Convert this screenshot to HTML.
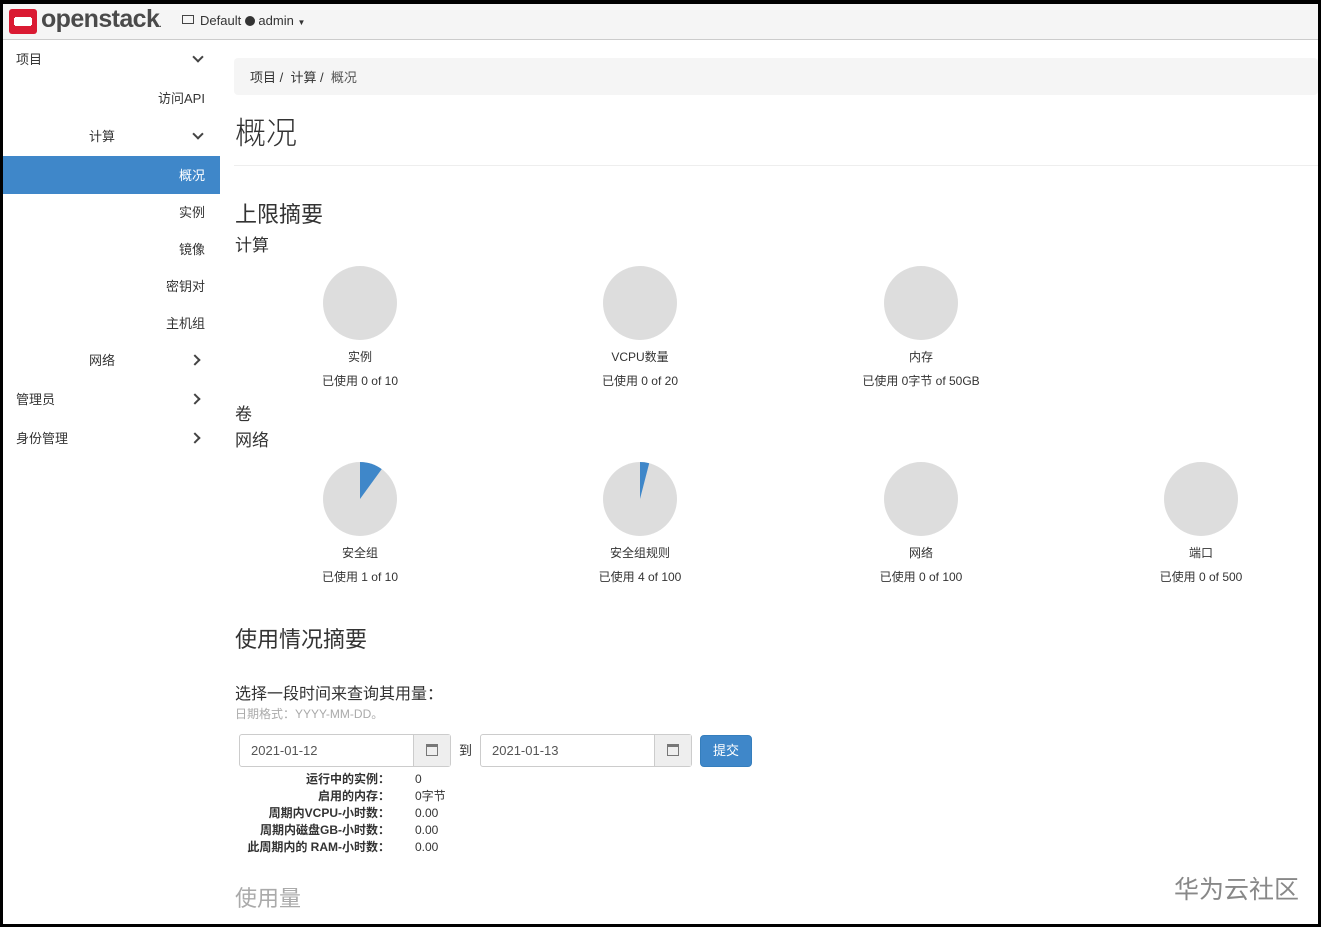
<!DOCTYPE html>
<html><head><meta charset="utf-8"><style>
*{margin:0;padding:0;box-sizing:border-box}
body{width:1321px;height:927px;background:#000;font-family:"Liberation Sans","Noto Sans CJK SC",sans-serif;color:#333;overflow:hidden;position:relative}
.page{position:absolute;left:3px;top:4px;width:1315px;height:920px;background:#fff;overflow:hidden}
.a{position:absolute;white-space:nowrap}
.top{position:absolute;left:0;top:0;width:1315px;height:36px;background:#f5f5f5;border-bottom:1px solid #ccc}
.nav{font-size:13px;color:#333}
.chev{position:absolute;width:8px;height:8px;border-right:2.5px solid #444;border-bottom:2.5px solid #444}
.pie{position:absolute;width:74px;height:74px}
.lbl{position:absolute;font-size:12px;text-align:center;width:200px}
.inp{position:absolute;height:33px;border:1px solid #ccc;border-radius:3px;font-size:13px;color:#555;padding:8px 11px}
.addon{position:absolute;top:0;right:0;width:37px;height:31px;background:#eee;border-left:1px solid #ccc}
.st{font-size:12px;color:#333}
</style></head><body><div class="page">
<div class="top">
 <div class="a" style="left:6px;top:5px;width:28px;height:25px;background:#da1a32;border-radius:3px"></div>
 <div class="a" style="left:12px;top:13px;width:16px;height:9px;background:#fff"></div>
 <div class="a" style="left:6px;top:14px;width:28px;height:7px;background:#fff"></div>
 <div class="a" style="left:6px;top:14px;width:5px;height:7px;background:#da1a32"></div>
 <div class="a" style="left:29px;top:14px;width:5px;height:7px;background:#da1a32"></div>
 <div class="a" style="left:38px;top:1px;font-size:25px;color:#4a4a4a;font-weight:bold;letter-spacing:-0.6px">openstack<span style="font-size:8px">.</span></div>
 <div class="a" style="left:179px;top:11px;width:12px;height:9px;border:1.5px solid #444"></div>
 <div class="a" style="left:197px;top:9px;font-size:13px;color:#333">Default <span style="display:inline-block;width:10px;height:10px;border-radius:50%;background:#333;vertical-align:-1px"></span> admin <span style="font-size:8px">▼</span></div>
</div>
<div class="a nav" style="left:13px;top:45px">项目</div><div class="chev" style="left:191px;top:49px;transform:rotate(45deg)"></div>
<div class="a nav" style="left:155px;top:84px">访问API</div>
<div class="a nav" style="left:86px;top:122px">计算</div><div class="chev" style="left:191px;top:126px;transform:rotate(45deg)"></div>
<div class="a" style="left:0;top:152px;width:217px;height:38px;background:#3f87c9"></div>
<div class="a nav" style="left:176px;top:161px;color:#fff">概况</div>
<div class="a nav" style="left:176px;top:198px">实例</div>
<div class="a nav" style="left:176px;top:235px">镜像</div>
<div class="a nav" style="left:163px;top:272px">密钥对</div>
<div class="a nav" style="left:163px;top:309px">主机组</div>
<div class="a nav" style="left:86px;top:346px">网络</div><div class="chev" style="left:188px;top:352px;transform:rotate(-45deg)"></div>
<div class="a nav" style="left:13px;top:385px">管理员</div><div class="chev" style="left:188px;top:391px;transform:rotate(-45deg)"></div>
<div class="a nav" style="left:13px;top:424px">身份管理</div><div class="chev" style="left:188px;top:430px;transform:rotate(-45deg)"></div>

<div class="a" style="left:231px;top:54px;width:1084px;height:37px;background:#f5f5f5;border-radius:4px"></div>
<div class="a" style="left:247px;top:63px;font-size:13px">项目 / &nbsp;计算 / &nbsp;<span style="color:#555">概况</span></div>
<div class="a" style="left:232px;top:104px;font-size:31px;font-weight:300">概况</div>
<div class="a" style="left:231px;top:161px;width:1084px;border-top:1px solid #eee"></div>
<div class="a" style="left:232px;top:193px;font-size:22px">上限摘要</div>
<div class="a" style="left:232px;top:227px;font-size:17px">计算</div>

<svg class="pie" style="left:320px;top:262px" viewBox="-37 -37 74 74"><circle r="37" fill="#ddd"/></svg>
<svg class="pie" style="left:600px;top:262px" viewBox="-37 -37 74 74"><circle r="37" fill="#ddd"/></svg>
<svg class="pie" style="left:881px;top:262px" viewBox="-37 -37 74 74"><circle r="37" fill="#ddd"/></svg>
<div class="lbl" style="left:257px;top:344px">实例</div><div class="lbl" style="left:257px;top:368px">已使用 0 of 10</div>
<div class="lbl" style="left:537px;top:344px">VCPU数量</div><div class="lbl" style="left:537px;top:368px">已使用 0 of 20</div>
<div class="lbl" style="left:818px;top:344px">内存</div><div class="lbl" style="left:818px;top:368px">已使用 0字节 of 50GB</div>

<div class="a" style="left:232px;top:396px;font-size:17px">卷</div>
<div class="a" style="left:232px;top:422px;font-size:17px">网络</div>

<svg class="pie" style="left:320px;top:458px" viewBox="-37 -37 74 74"><circle r="37" fill="#ddd"/><path d="M0 0V-37A37 37 0 0 1 21.7 -29.9Z" fill="#3f87c9"/></svg>
<svg class="pie" style="left:600px;top:458px" viewBox="-37 -37 74 74"><circle r="37" fill="#ddd"/><path d="M0 0V-37A37 37 0 0 1 9.2 -35.8Z" fill="#3f87c9"/></svg>
<svg class="pie" style="left:881px;top:458px" viewBox="-37 -37 74 74"><circle r="37" fill="#ddd"/></svg>
<svg class="pie" style="left:1161px;top:458px" viewBox="-37 -37 74 74"><circle r="37" fill="#ddd"/></svg>
<div class="lbl" style="left:257px;top:540px">安全组</div><div class="lbl" style="left:257px;top:564px">已使用 1 of 10</div>
<div class="lbl" style="left:537px;top:540px">安全组规则</div><div class="lbl" style="left:537px;top:564px">已使用 4 of 100</div>
<div class="lbl" style="left:818px;top:540px">网络</div><div class="lbl" style="left:818px;top:564px">已使用 0 of 100</div>
<div class="lbl" style="left:1098px;top:540px">端口</div><div class="lbl" style="left:1098px;top:564px">已使用 0 of 500</div>

<div class="a" style="left:232px;top:618px;font-size:22px">使用情况摘要</div>
<div class="a" style="left:232px;top:676px;font-size:16px">选择一段时间来查询其用量：</div>
<div class="a" style="left:232px;top:701px;font-size:12px;color:#aaa">日期格式：YYYY-MM-DD。</div>
<div class="inp" style="left:236px;top:730px;width:212px">2021-01-12<div class="addon"><span class="a" style="left:12px;top:9px;width:12px;height:12px;border:1.5px solid #777;border-top-width:3px"></span></div></div>
<div class="a" style="left:456px;top:736px;font-size:13px">到</div>
<div class="inp" style="left:477px;top:730px;width:212px">2021-01-13<div class="addon"><span class="a" style="left:12px;top:9px;width:12px;height:12px;border:1.5px solid #777;border-top-width:3px"></span></div></div>
<div class="a" style="left:697px;top:731px;width:52px;height:32px;background:#3f87c9;border:1px solid #357ebd;border-radius:4px;color:#fff;font-size:13px;text-align:center;line-height:30px">提交</div>
<div class="a st" style="left:200px;top:767px;width:187px;text-align:right;font-weight:bold;line-height:17px">运行中的实例：<br>启用的内存：<br>周期内VCPU-小时数：<br>周期内磁盘GB-小时数：<br>此周期内的 RAM-小时数：</div>
<div class="a st" style="left:412px;top:767px;line-height:17px">0<br>0字节<br>0.00<br>0.00<br>0.00</div>
<div class="a" style="left:232px;top:877px;font-size:22px;color:#aaa">使用量</div>
<div class="a" style="left:1171px;top:866px;font-size:25px;color:#888">华为云社区</div>
</div></body></html>
